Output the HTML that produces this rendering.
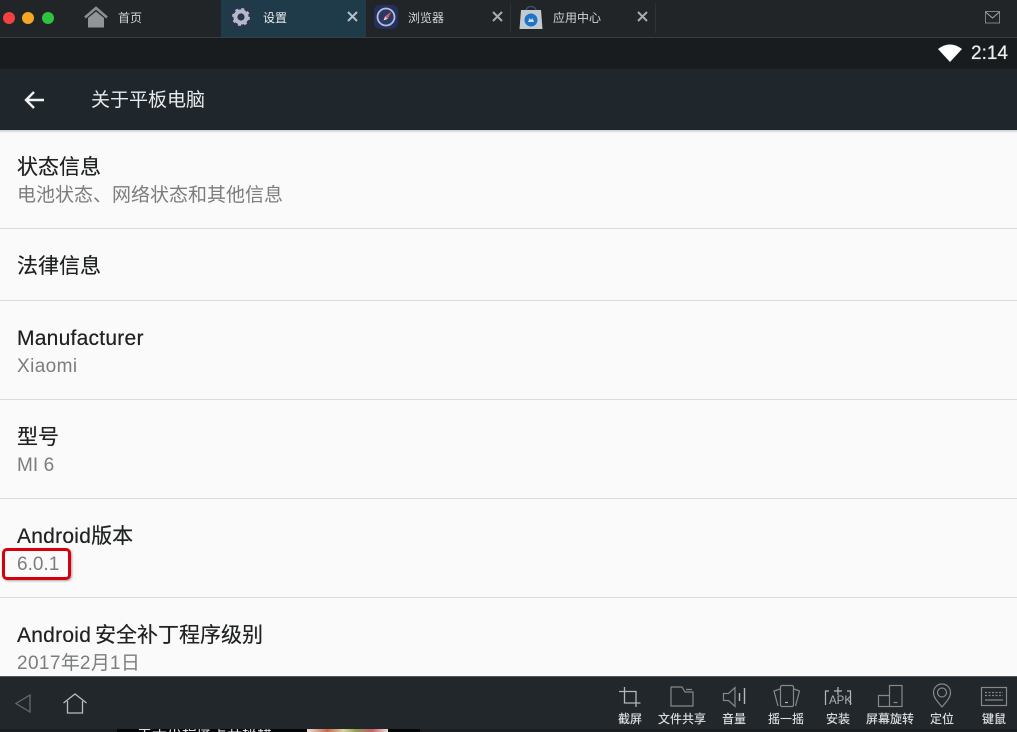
<!DOCTYPE html>
<html lang="zh"><head><meta charset="utf-8"><style>
*{box-sizing:border-box}
html,body{margin:0;padding:0;width:1017px;height:732px;overflow:hidden;background:#000}
body{position:relative;font-family:"Liberation Sans","Noto Sans CJK SC",sans-serif}
#w{position:absolute;left:0;top:0;width:1017px;height:732px;filter:blur(.35px)}
.a{position:absolute;white-space:nowrap}
.t{font-size:21px;line-height:30px;color:#1f2122;left:17px;text-shadow:0 0 .4px #1f2122}
.t b{font-weight:400;letter-spacing:.25px}
.s{font-size:19px;line-height:26px;color:#7b7d7e;left:17px}
.s b{font-weight:400;letter-spacing:.4px}
.l{position:absolute;left:0;width:1017px;height:1px;background:#dcdcdc}
.tab{font-size:12px;line-height:16px;top:10px;color:#d2d4d5}
.x{position:absolute;top:11px}
.b{font-size:12px;line-height:14px;top:712px;color:#dcdedf;transform:translateX(-50%);text-shadow:0 0 .4px #dcdedf}
svg{position:absolute;overflow:visible}
</style></head><body><div id="w">
<div class="a" style="left:0;top:0;width:1017px;height:37px;background:#222528"></div>
<div class="a" style="left:0;top:37px;width:1017px;height:1px;background:#3b3e40"></div>
<div class="a" style="left:221px;top:0;width:145px;height:37px;background:#1f3b49"></div>
<div class="a" style="left:0;top:38px;width:1017px;height:31px;background:#191c1f"></div>
<div class="a" style="left:0;top:69px;width:1017px;height:61px;background:#1f272d"></div>
<div class="a" style="left:0;top:130px;width:1017px;height:546px;background:#fafafa"></div>
<div class="a" style="left:0;top:130px;width:1017px;height:3px;background:linear-gradient(#c9cacb,#fafafa)"></div>

<div class="a" style="left:3px;top:12px;width:12px;height:12px;border-radius:50%;background:#f2413f"></div>
<div class="a" style="left:22px;top:12px;width:12px;height:12px;border-radius:50%;background:#f5a623"></div>
<div class="a" style="left:42px;top:12px;width:12px;height:12px;border-radius:50%;background:#2fc23e"></div>

<svg style="left:84px;top:6px" width="24" height="22" viewBox="0 0 24 22"><path d="M1 11.500 12 2l11 9.500" fill="none" stroke="#8b8e90" stroke-width="2.600"/><path d="M4 12 12 5.500 20 12v9.500H4z" fill="#929597"/></svg>
<div class="a tab" style="left:118px">首页</div>

<svg style="left:229px;top:5px" width="24" height="24" viewBox="0 0 24 24"><rect width="24" height="24" rx="6" fill="#26364e"/><circle cx="12" cy="12" r="5.600" fill="none" stroke="#b4bac8" stroke-width="4"/><circle cx="12" cy="12" r="8" fill="none" stroke="#b4bac8" stroke-width="2" stroke-dasharray="3 3.300"/></svg>
<div class="a tab" style="left:263px;color:#eceeef">设置</div>
<svg class="x" style="left:347px" width="11" height="11"><path d="M1 1l9 9M10 1l-9 9" stroke="#b4c0c4" stroke-width="2"/></svg>

<svg style="left:374px;top:5px" width="24" height="24" viewBox="0 0 24 24"><rect width="24" height="24" rx="6" fill="#23305f"/><circle cx="12" cy="12" r="8.500" fill="#2b3767" stroke="#b9bdd0" stroke-width="1.800"/><path d="M17 7l-3.500 7-4 1.500 1.500-4z" fill="#d8dae3"/><path d="M17 7l-6 4.500 2.500 2.500z" fill="#e0584f"/></svg>
<div class="a tab" style="left:408px">浏览器</div>
<svg class="x" style="left:492px" width="11" height="11"><path d="M1 1l9 9M10 1l-9 9" stroke="#a9abac" stroke-width="2"/></svg>
<div class="a" style="left:510px;top:3px;width:1px;height:30px;background:#303335"></div>

<svg style="left:519px;top:5px" width="24" height="25" viewBox="0 0 24 25"><path d="M7 6C7 0 17 0 17 6" fill="none" stroke="#3b5670" stroke-width="1.200"/><path d="M2 5h20l1.500 19H.5z" fill="#c3cbd0"/><circle cx="12" cy="15" r="6.500" fill="#1f73c9"/><path d="M9 17l1.600-4 1.400 2 1.400-2 1.600 4z" fill="#cfe0f2"/></svg>
<div class="a tab" style="left:553px">应用中心</div>
<svg class="x" style="left:637px" width="11" height="11"><path d="M1 1l9 9M10 1l-9 9" stroke="#a9abac" stroke-width="2"/></svg>
<div class="a" style="left:655px;top:3px;width:1px;height:30px;background:#303335"></div>

<svg style="left:985px;top:11px" width="15" height="13"><rect x=".5" y=".5" width="14" height="11.500" fill="none" stroke="#7f8285"/><path d="M.5 1 7.500 7l7-6" fill="none" stroke="#a6a9ab"/></svg>

<svg style="left:938px;top:44px" width="24" height="18"><path d="M0 5Q12-4 24 5L12 18z" fill="#fff"/></svg>
<div class="a" style="left:971px;top:42px;font-size:19px;line-height:24px;color:#eeefef;text-shadow:0 0 .6px #eeefef">2:14</div>

<svg style="left:23px;top:90px" width="22" height="20"><path d="M21 10H3M11 2 3 10l8 8" fill="none" stroke="#f1f2f2" stroke-width="2.400"/></svg>
<div class="a" style="left:91px;top:87px;font-size:19px;line-height:28px;color:#e8eaeb">关于平板电脑</div>

<div class="a t" style="top:153px">状态信息</div>
<div class="a s" style="top:183px">电池状态、网络状态和其他信息</div>
<div class="l" style="top:228px"></div>
<div class="a t" style="top:252px">法律信息</div>
<div class="l" style="top:300px"></div>
<div class="a t" style="top:324px"><b>Manufacturer</b></div>
<div class="a s" style="top:354px"><b>Xiaomi</b></div>
<div class="l" style="top:399px"></div>
<div class="a t" style="top:423px">型号</div>
<div class="a s" style="top:453px"><b style="letter-spacing:.1px">MI 6</b></div>
<div class="l" style="top:498px"></div>
<div class="a t" style="top:522px"><b>Android</b>版本</div>
<div class="a s" style="top:552px"><b style="letter-spacing:0">6.0.1</b></div>
<div class="a" style="left:2px;top:548px;width:69px;height:32px;border:3.500px solid #d5000c;border-radius:5px;box-shadow:1px 1px 2px rgba(0,0,0,.35)"></div>
<div class="l" style="top:597px"></div>
<div class="a t" style="top:621px;word-spacing:-2px"><b>Android</b> 安全补丁程序级别</div>
<div class="a s" style="top:651px"><b>2017</b>年<b>2</b>月<b>1</b>日</div>

<div class="a" style="left:0;top:676px;width:1017px;height:53px;background:#22272b;border-top:1px solid #55585a"></div>
<div class="a" style="left:0;top:729px;width:1017px;height:3px;background:#1b1e21;overflow:hidden">
<div class="a" style="left:117px;top:0;width:303px;height:3px;background:#050505"></div>
<div class="a" style="left:137px;top:-3px;font-size:15px;line-height:16px;color:#ddd">关于小程序上升秘籍</div>
<div class="a" style="left:307px;top:0;width:81px;height:3px;background:linear-gradient(90deg,#e8e4da,#c9684a 25%,#d8d2a0 45%,#8fa24f 60%,#c65a6a 80%,#e8e4da)"></div>
</div>

<svg style="left:15px;top:694px" width="16" height="19"><path d="M15 1v17L1 9.500z" fill="none" stroke="#65696c" stroke-width="1.300"/></svg>
<svg style="left:63px;top:693px" width="24" height="21"><path d="M.500 10 12 1l11.500 9" fill="none" stroke="#b9bcbe" stroke-width="1.300"/><path d="M4.500 8v12h15V8" fill="none" stroke="#b9bcbe" stroke-width="1.300"/></svg>

<svg style="left:0;top:0" width="1017" height="732" fill="none" stroke="#85888b" stroke-width="1.200">
<path d="M619 691.500h17V707M624.500 687v16h16" stroke="#b4b7b9" stroke-width="1.300"/>
<path d="M671 706V687h11l3 5h8v14zM686 689.500h6"/>
<path d="M723.500 693.500h5l6.500-6v19l-6.500-6h-5z"/>
<path d="M739.500 693v8M744.500 688v16" stroke="#b4b7b9" stroke-width="1.400"/>
<rect x="780.500" y="685.500" width="13" height="21" rx="1.500"/>
<path d="M780 689l-6 2 4 15M794 689l5.500 2-4 15"/>
<path d="M785 702.500h3" stroke="#b4b7b9"/>
<path d="M838 687v8M834 691h8M829 691h-3.500v14M847 691h3.500v14" stroke="#b4b7b9"/>
<rect x="889.500" y="685.500" width="12.500" height="21"/>
<path d="M889 695.500h-10.500v11H889M893.500 702.500h4"/>
<path d="M942 707c-5-6-8.500-9.500-8.500-14.500a8.500 8.500 0 0 1 17 0c0 5-3.500 8.500-8.500 14.500z"/>
<circle cx="942" cy="692.500" r="4.500"/>
<rect x="981.500" y="687.500" width="25" height="18"/>
<path d="M985 692.500h18M985 695.500h18" stroke-dasharray="2 1.500"/>
<path d="M985 700h18"/>
</svg>
<div class="a" style="left:829px;top:695px;font-size:11.500px;line-height:13px;color:#aeb1b3">APK</div>

<div class="a b" style="left:630px">截屏</div>
<div class="a b" style="left:682px">文件共享</div>
<div class="a b" style="left:734px">音量</div>
<div class="a b" style="left:786px">摇一摇</div>
<div class="a b" style="left:838px">安装</div>
<div class="a b" style="left:890px">屏幕旋转</div>
<div class="a b" style="left:942px">定位</div>
<div class="a b" style="left:994px">键鼠</div>
</div></body></html>
